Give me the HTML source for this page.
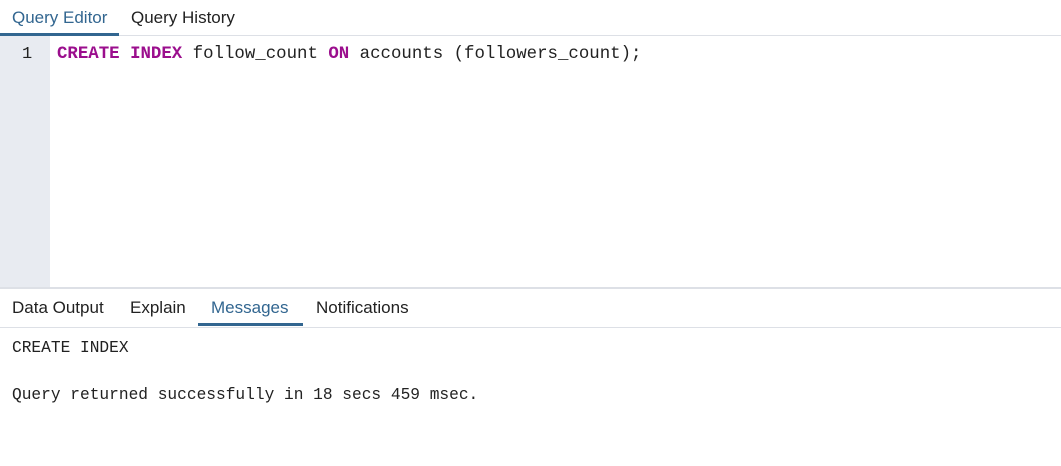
<!DOCTYPE html>
<html><head><style>
body{margin:0;width:1061px;height:466px;background:#fff;overflow:hidden;font-family:"Liberation Sans",sans-serif;position:relative}
.tab{position:absolute;font-size:17px;color:#222}
.act{color:#326690}
.ul{position:absolute;background:#326690;height:3px}
.line{position:absolute;left:0;width:1061px;background:#dde0e6}
.mono{font-family:"Liberation Mono",monospace;position:absolute;white-space:pre}
.kw{color:#9b0e8d;font-weight:bold}
</style></head><body>
<div class="tab act" style="left:12px;top:8px">Query Editor</div>
<div class="tab" style="left:131px;top:8px">Query History</div>
<div class="line" style="top:35px;height:1px"></div>
<div class="ul" style="left:0;top:33px;width:119px"></div>
<div style="position:absolute;left:0;top:36px;width:50px;height:251px;background:#e8ebf1"></div>
<div class="mono" style="left:22px;top:45px;font-size:17px;color:#222">1</div>
<div class="mono" style="left:57px;top:45px;font-size:17.4px;color:#222"><span class="kw">CREATE</span> <span class="kw">INDEX</span> follow_count <span class="kw">ON</span> accounts (followers_count);</div>
<div class="line" style="top:287px;height:2px"></div>
<div class="tab" style="left:12px;top:298px">Data Output</div>
<div class="tab" style="left:130px;top:298px">Explain</div>
<div class="tab act" style="left:211px;top:298px">Messages</div>
<div class="tab" style="left:316px;top:298px">Notifications</div>
<div class="line" style="top:327px;height:1px"></div>
<div class="ul" style="left:198px;top:323px;width:105px"></div>
<div class="mono" style="left:12px;top:339px;font-size:16.2px;color:#222">CREATE INDEX</div>
<div class="mono" style="left:12px;top:386px;font-size:16.2px;color:#222">Query returned successfully in 18 secs 459 msec.</div>
</body></html>
